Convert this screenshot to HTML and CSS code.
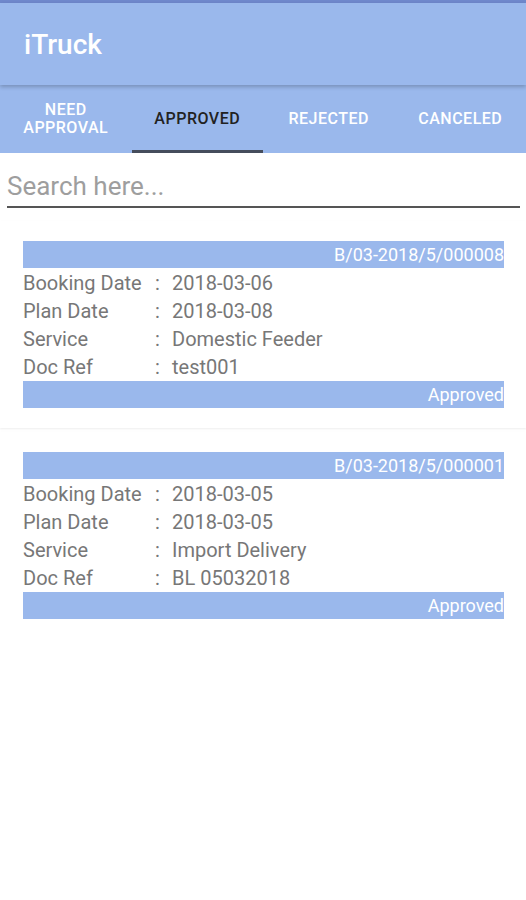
FILE: index.html
```html
<!DOCTYPE html>
<html>
<head>
  <meta charset="UTF-8">
  <link rel="stylesheet" href="styles.css">
</head>
<body>
  <div id="statusLine"></div>
  <div id="appBar">iTruck</div>
  <div id="tabBar">
    <div class="tab">NEED<br>APPROVAL</div>
    <div class="tab active">APPROVED</div>
    <div class="tab">REJECTED</div>
    <div class="tab">CANCELED</div>
  </div>
  <div id="searchRow">
    <input id="searchInput" type="text" placeholder="Search here..." autocomplete="off" />
  </div>
  <div id="bookingList">
    <div class="booking-card">
      <div class="card-head">B/03-2018/5/000008</div>
      <div class="card-row"><span class="lbl">Booking Date</span><span class="sep">:</span><span class="val">2018-03-06</span></div>
      <div class="card-row"><span class="lbl">Plan Date</span><span class="sep">:</span><span class="val">2018-03-08</span></div>
      <div class="card-row"><span class="lbl">Service</span><span class="sep">:</span><span class="val">Domestic Feeder</span></div>
      <div class="card-row"><span class="lbl">Doc Ref</span><span class="sep">:</span><span class="val">test001</span></div>
      <div class="card-foot">Approved</div>
    </div>
    <div class="booking-card">
      <div class="card-head">B/03-2018/5/000001</div>
      <div class="card-row"><span class="lbl">Booking Date</span><span class="sep">:</span><span class="val">2018-03-05</span></div>
      <div class="card-row"><span class="lbl">Plan Date</span><span class="sep">:</span><span class="val">2018-03-05</span></div>
      <div class="card-row"><span class="lbl">Service</span><span class="sep">:</span><span class="val">Import Delivery</span></div>
      <div class="card-row"><span class="lbl">Doc Ref</span><span class="sep">:</span><span class="val">BL 05032018</span></div>
      <div class="card-foot">Approved</div>
    </div>
  </div>
</body>
</html>
```

FILE: styles.css
```css
body { font-family: Roboto, "Noto Sans", sans-serif; margin: 0; width: 526px; background: #fff; }
#statusLine { height: 3px; background: #6f88cc; }
#appBar { height: 82px; background: #9ab8ec; color: #fff; font-size: 28px; font-weight: 500; display: flex; align-items: center; padding-left: 24px; position: relative; z-index: 1; box-shadow: 0 2px 4px rgba(0,0,0,0.22); }
#tabBar { display: flex; height: 68px; background: #9ab8ec; }
.tab { flex: 1; display: flex; align-items: center; justify-content: center; text-align: center; color: #fff; font-size: 16px; font-weight: 500; letter-spacing: 0.5px; line-height: 18px; border-bottom: 3px solid transparent; margin-top: 3px; }
.tab.active { color: #222; border-bottom-color: #454d5c; }
#searchRow { padding: 12px 6px 0 7px; }
#searchInput { width: 100%; box-sizing: border-box; border: none; border-bottom: 2px solid #555; outline: none; font-family: Roboto, sans-serif; font-size: 26px; padding: 6px 0 5px 0; color: #333; }
#searchInput::placeholder { color: #9e9e9e; }
#bookingList { display: flex; flex-direction: column; gap: 4px; margin-top: 13px; }
.booking-card { padding: 20px 22px 20px 23px; background: #fff; box-shadow: 0 1px 2px rgba(0,0,0,0.07); }
.card-head, .card-foot { background: #9ab8ec; color: #fff; font-size: 18px; height: 27px; line-height: 27px; text-align: right; }
.card-head { margin-bottom: 1px; }
.card-row { display: flex; height: 28px; align-items: center; font-size: 20px; color: #777; }
.lbl { width: 132px; }
.sep { width: 17px; }
.val { flex: 1; }
```
